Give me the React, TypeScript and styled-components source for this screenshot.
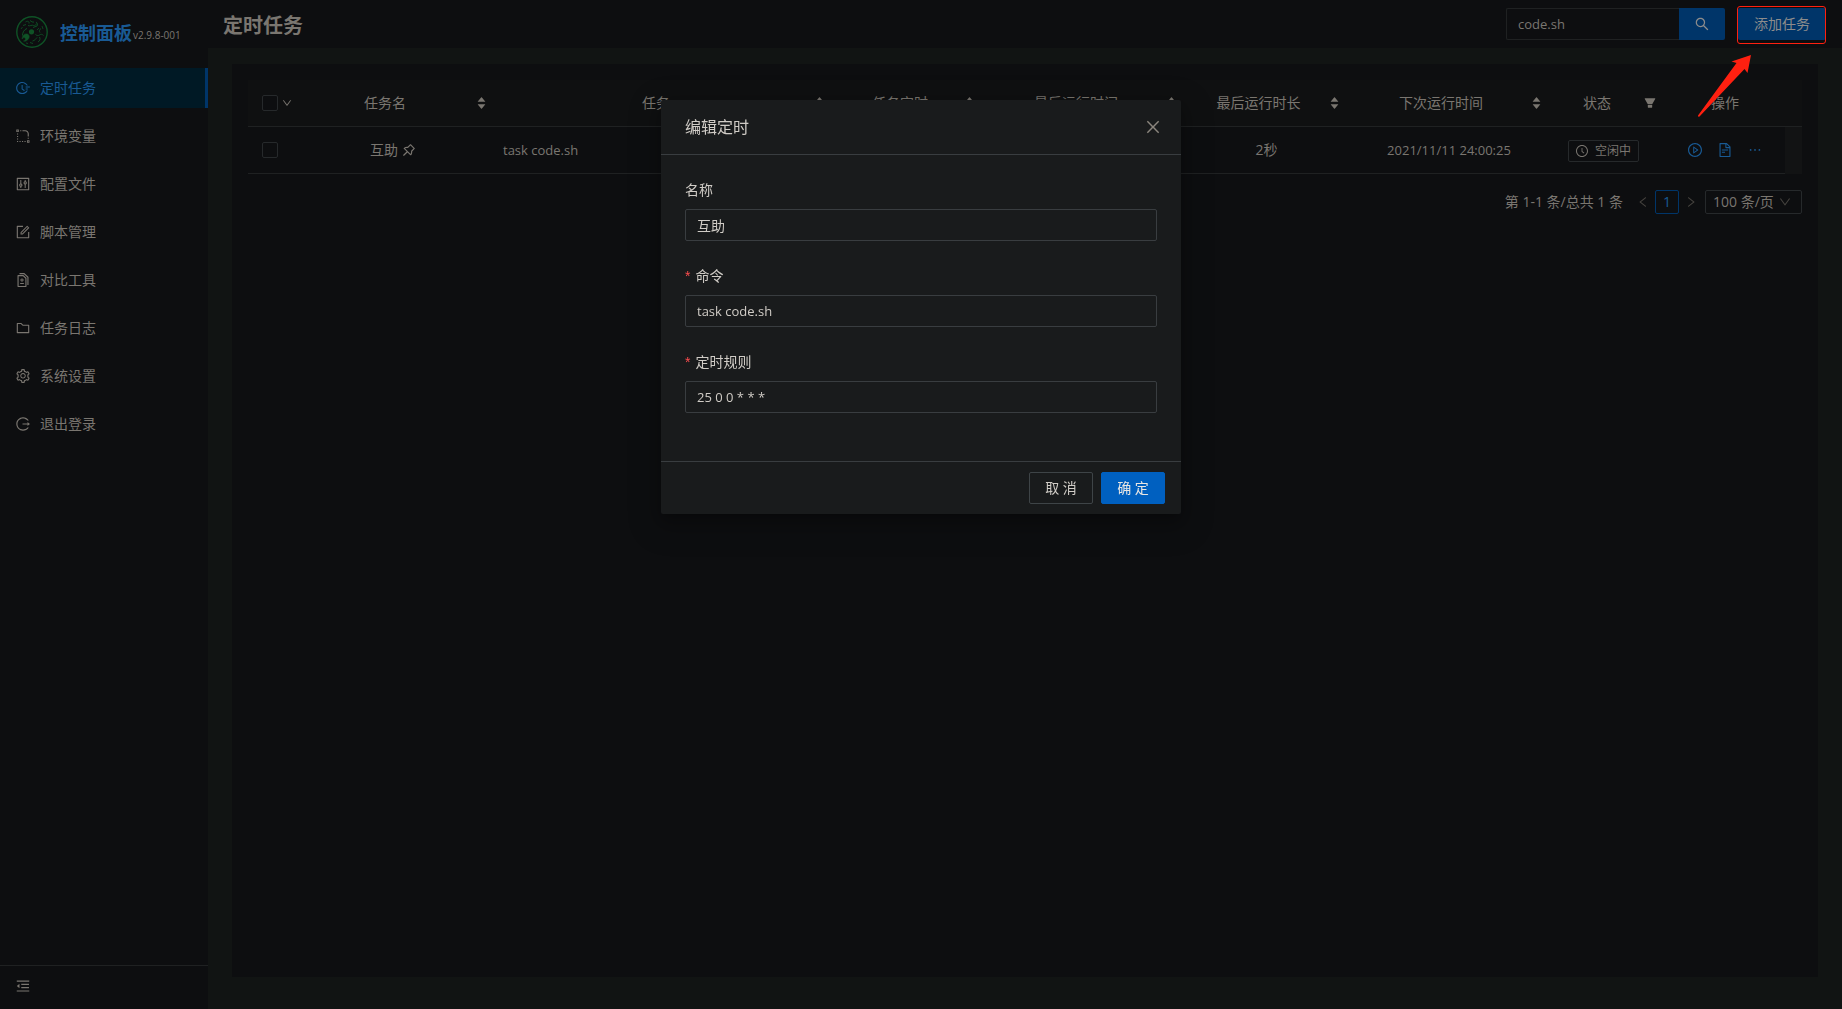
import React, { useState } from 'react';
import styled, { createGlobalStyle, css } from 'styled-components';
import type { IconType } from 'react-icons';
import {
  AiOutlineFieldTime,
  AiOutlineRadiusSetting,
  AiOutlineControl,
  AiOutlineForm,
  AiOutlineDiff,
  AiOutlineFolder,
  AiOutlineSetting,
  AiOutlineLogout,
  AiOutlineMenuFold,
  AiOutlinePushpin,
  AiOutlineClockCircle,
  AiOutlinePlayCircle,
  AiOutlineFileText,
  AiOutlineEllipsis,
  AiOutlineSearch,
  AiOutlineClose,
  AiOutlineLeft,
  AiOutlineRight,
  AiOutlineDown,
  AiFillCaretUp,
  AiFillCaretDown,
  AiFillFilter,
} from 'react-icons/ai';

const color = {
  surface: '#0d0e10',
  page: '#111413',
  tableHead: '#0f1011',
  gutter: '#121314',
  line: '#1f2122',
  text: '#7a7670',
  faint: '#46433f',
  link: '#195a94',
  primary: '#003569',
  modal: '#191b1c',
  modalLine: '#393d40',
  modalText: '#d0ccc6',
  modalPrimary: '#0060c0',
  danger: '#ff4d4f',
  mark: '#ff2010',
};

const GlobalStyle = createGlobalStyle`
  *, *::before, *::after { box-sizing: border-box; }
  body {
    margin: 0;
    background: ${color.page};
    color: ${color.text};
    font-family: "Open Sans", "Noto Sans CJK SC", sans-serif;
    font-size: 14px;
    line-height: 22px;
  }
  button, input, select { font: inherit; color: inherit; }
  svg { display: block; flex: none; }
`;

const Layout = styled.div`
  display: flex;
  min-height: 100vh;
`;

const Sider = styled.aside`
  display: flex;
  flex-direction: column;
  flex: 0 0 208px;
  background: ${color.surface};
`;

const Brand = styled.a`
  display: flex;
  align-items: center;
  height: 64px;
  padding: 0 16px;
  text-decoration: none;
  color: ${color.text};
`;

const BrandName = styled.h1`
  margin: 2px 0 0 12px;
  font-size: 18px;
  font-weight: 700;
  color: ${color.link};
`;

const Version = styled.span`
  margin: 6px 0 0 1px;
  font-size: 10px;
`;

const Menu = styled.nav`
  display: flex;
  flex-direction: column;
  gap: 8px;
  flex: 1;
  padding-top: 4px;
`;

const MenuLink = styled.a<{ $active?: boolean }>`
  display: flex;
  align-items: center;
  gap: 10px;
  height: 40px;
  padding-left: 16px;
  text-decoration: none;
  color: ${color.text};
  ${(p) =>
    p.$active &&
    css`
      color: ${color.link};
      background: #001925;
      border-right: 3px solid ${color.primary};
    `}
`;

const Collapse = styled.button`
  display: flex;
  align-items: center;
  height: 44px;
  padding: 0 16px 4px;
  border: 0;
  border-top: 1px solid ${color.line};
  background: none;
`;

const Main = styled.main`
  display: flex;
  flex-direction: column;
  flex: 1;
  min-width: 0;
`;

const Header = styled.header`
  display: flex;
  align-items: center;
  justify-content: space-between;
  height: 48px;
  padding: 0 16px 0 15px;
  background: ${color.surface};
`;

const PageTitle = styled.h2`
  margin: 0;
  padding-top: 4px;
  font-size: 20px;
  font-weight: 700;
`;

const Actions = styled.div`
  display: flex;
  align-items: center;
  gap: 13px;
`;

const SearchBox = styled.form`
  display: flex;
  width: 219px;
`;

const SearchInput = styled.input`
  flex: 1;
  min-width: 0;
  height: 32px;
  padding: 0 11px;
  border: 1px solid ${color.line};
  border-right: 0;
  border-radius: 2px 0 0 2px;
  background: ${color.surface};
  font-size: 13px;
  outline: 0;
`;

const SearchButton = styled.button`
  display: flex;
  align-items: center;
  justify-content: center;
  width: 46px;
  height: 32px;
  padding: 0;
  border: 0;
  border-radius: 0 2px 2px 0;
  background: ${color.primary};
  color: #8c8c8c;
`;

const Callout = styled.div`
  position: relative;
`;

const AddButton = styled.button`
  height: 32px;
  padding: 0 16px;
  border: 0;
  border-radius: 2px;
  background: ${color.primary};
  color: #8c8c8c;
`;

const CalloutFrame = styled.span`
  position: absolute;
  inset: -2px 0 -4px -1px;
  border: 1px solid ${color.mark};
  border-radius: 3px;
  pointer-events: none;
`;

const CalloutArrow = styled.svg`
  position: absolute;
  top: 47px;
  left: -41px;
  pointer-events: none;
`;

const Card = styled.section`
  flex: 1;
  margin: 16px 24px 32px;
  padding: 16px;
  background: ${color.surface};
`;

const Table = styled.table`
  width: 100%;
  table-layout: fixed;
  border-collapse: separate;
  border-spacing: 0;
`;

const Th = styled.th`
  height: 47px;
  padding: 0 8px;
  border-bottom: 1px solid ${color.line};
  background: ${color.tableHead};
  font-weight: 400;
  text-align: center;
`;

const Td = styled.td<{ $left?: boolean; $latin?: boolean }>`
  height: 47px;
  padding: 0 8px;
  border-bottom: 1px solid ${color.line};
  text-align: ${(p) => (p.$left ? 'left' : 'center')};
  font-size: ${(p) => (p.$latin ? '13px' : '14px')};
`;

const Gutter = styled.td`
  padding: 0;
  background: ${color.gutter};
`;

const HeadCell = styled.div`
  display: flex;
  align-items: center;
  gap: 4px;
`;

const HeadTitle = styled.span`
  flex: 1;
  white-space: nowrap;
`;

const Sorter = styled.button`
  display: flex;
  flex-direction: column;
  align-items: center;
  width: 12px;
  padding: 0;
  border: 0;
  background: none;
  svg + svg { margin-top: -4px; }
`;

const FilterButton = styled.button`
  width: 12px;
  margin: 0 1px 0 4px;
  padding: 0;
  border: 0;
  background: none;
`;

const SelectCell = styled.div`
  display: flex;
  align-items: center;
  gap: 4px;
  padding-left: 6px;
`;

const Checkbox = styled.input.attrs({ type: 'checkbox' })`
  appearance: none;
  flex: none;
  width: 16px;
  height: 16px;
  margin: 0;
  border: 1px solid #26292b;
  border-radius: 2px;
  background: ${color.surface};
`;

const Inline = styled.div<{ $gap: number; $color?: string }>`
  display: flex;
  align-items: center;
  justify-content: center;
  gap: ${(p) => p.$gap}px;
  color: ${(p) => p.$color ?? 'inherit'};
`;

const Tag = styled.span`
  display: inline-flex;
  align-items: center;
  gap: 7px;
  height: 22px;
  margin-right: 8px;
  padding: 0 7px;
  border: 1px solid #26292b;
  border-radius: 2px;
  font-size: 12px;
  vertical-align: middle;
`;

const IconButton = styled.button`
  padding: 0;
  border: 0;
  background: none;
  color: inherit;
`;

const Pagination = styled.nav`
  display: flex;
  align-items: center;
  justify-content: flex-end;
  margin-top: 16px;
  height: 24px;
`;

const Total = styled.span`
  margin-right: 8px;
`;

const PageArrow = styled.button`
  display: flex;
  align-items: center;
  justify-content: center;
  width: 24px;
  height: 24px;
  padding: 0;
  border: 0;
  background: none;
  color: ${color.faint};
`;

const PageNumber = styled.button`
  width: 24px;
  height: 24px;
  padding: 0;
  border: 1px solid ${color.primary};
  border-radius: 2px;
  background: none;
  color: ${color.link};
  line-height: 20px;
`;

const PageSize = styled.div`
  display: grid;
  grid-template-columns: 1fr;
  align-items: center;
  width: 97px;
  margin-left: 2px;
  > * { grid-area: 1 / 1; }
  svg {
    justify-self: end;
    margin-right: 11px;
    color: ${color.faint};
    pointer-events: none;
  }
`;

const PageSizeSelect = styled.select`
  appearance: none;
  width: 100%;
  height: 24px;
  padding: 0 7px;
  border: 1px solid #26292b;
  border-radius: 2px;
  background: ${color.surface};
  line-height: 20px;
`;

const ModalWrap = styled.div`
  position: fixed;
  inset: 0;
  display: flex;
  align-items: flex-start;
  justify-content: center;
  padding-top: 100px;
`;

const Modal = styled.div`
  width: 520px;
  border-radius: 2px;
  background: ${color.modal};
  color: ${color.modalText};
  box-shadow:
    0 3px 6px -4px rgba(0, 0, 0, 0.24),
    0 6px 16px 0 rgba(0, 0, 0, 0.2),
    0 9px 28px 8px rgba(0, 0, 0, 0.16);
`;

const ModalHead = styled.div`
  display: flex;
  align-items: center;
  justify-content: space-between;
  height: 55px;
  padding: 0 20px 0 24px;
  border-bottom: 1px solid ${color.modalLine};
`;

const ModalTitle = styled.h3`
  margin: 0;
  font-size: 16px;
  font-weight: 400;
`;

const CloseButton = styled.button`
  padding: 0;
  border: 0;
  background: none;
  color: #8a857d;
`;

const ModalBody = styled.form`
  padding: 24px;
`;

const Field = styled.div`
  display: flex;
  flex-direction: column;
  gap: 8px;
  margin-bottom: 24px;
`;

const Label = styled.label<{ $required?: boolean }>`
  display: flex;
  ${(p) =>
    p.$required &&
    css`
      &::before {
        content: '*';
        margin-right: 5px;
        color: ${color.danger};
        font-family: "Liberation Sans", sans-serif;
      }
    `}
`;

const TextInput = styled.input<{ $latin?: boolean }>`
  width: 100%;
  height: 32px;
  padding: 0 11px;
  border: 1px solid ${color.modalLine};
  border-radius: 2px;
  background: ${color.modal};
  font-size: ${(p) => (p.$latin ? '13px' : '14px')};
  outline: 0;
`;

const ModalFoot = styled.div`
  display: flex;
  justify-content: flex-end;
  gap: 8px;
  padding: 10px 16px;
  border-top: 1px solid ${color.modalLine};
`;

const FootButton = styled.button<{ $primary?: boolean }>`
  width: 64px;
  height: 32px;
  padding: 0;
  border: 1px solid ${(p) => (p.$primary ? color.modalPrimary : '#3e4447')};
  border-radius: 2px;
  background: ${(p) => (p.$primary ? color.modalPrimary : color.modal)};
  color: ${(p) => (p.$primary ? '#e8e6e3' : 'inherit')};
`;

const menu = [
  { label: '定时任务', icon: AiOutlineFieldTime },
  { label: '环境变量', icon: AiOutlineRadiusSetting },
  { label: '配置文件', icon: AiOutlineControl },
  { label: '脚本管理', icon: AiOutlineForm },
  { label: '对比工具', icon: AiOutlineDiff },
  { label: '任务日志', icon: AiOutlineFolder },
  { label: '系统设置', icon: AiOutlineSetting },
  { label: '退出登录', icon: AiOutlineLogout },
];

const sortable = ['任务名', '任务', '任务定时', '最后运行时间', '最后运行时长', '下次运行时间'];

/* The icon set leaves a 64-unit margin inside its 1024 grid; trim it so the glyph fills its box. */
function Glyph({ icon: Icon, size = 14 }: { icon: IconType; size?: number }) {
  return <Icon size={size} viewBox="64 64 896 896" />;
}

function DragonLogo() {
  return (
    <svg width="32" height="32" viewBox="0 0 32 32" fill="none" stroke="#0f5226" aria-hidden="true">
      <circle cx="16" cy="16" r="15.2" strokeWidth="1.4" />
      <circle cx="15.5" cy="15.8" r="2.6" fill="#0f5226" stroke="none" />
      <path d="M9.500 6c2-1.500 4-.5 3.500 1.500M14 4.500c1.500 1 2.500 2 4 1.500M12 9.500c2 1 4-1 5.500 0s2.500-1 3-2M7 9.500l3-1M20 6c1.500 1 2 2.500 1 4M17 11.500l4-1.500" strokeWidth="0.900" />
      <path d="M11 12.500c-3 1-4.500 4-4.500 7" strokeWidth="1" />
      <path d="M6 23c.5-4 2.500-5.500 5-5s3 3.500 1 5.500-4 2-4.500 1.500c2-.5 2.500-2 1.500-3s-2 0-3 1z" fill="#0f5226" strokeWidth="0.500" />
      <path d="M19.500 18.500c1 1 2.500 1.500 4 .5s2.500-1 4 .5M21 21.500c-1.500 1.500-2 3-4.500 3.500M23.500 21c1 1.500.5 4-1.500 5M25 12.500c-1.500 1-2 2.500-1 4M14 26.500l3 1" strokeWidth="0.900" />
      <path d="M5 13l1.500-2M26 10l1 3M10 27l2 .5M21 14l2-2" strokeWidth="0.800" />
    </svg>
  );
}

export default function App() {
  const [query, setQuery] = useState('code.sh');
  const [name, setName] = useState('互助');
  const [command, setCommand] = useState('task code.sh');
  const [schedule, setSchedule] = useState('25 0 0 * * *');

  return (
    <>
      <GlobalStyle />
      <Layout>
        <Sider>
          <Brand href="#">
            <DragonLogo />
            <BrandName>控制面板</BrandName>
            <Version>v2.9.8-001</Version>
          </Brand>
          <Menu aria-label="控制面板">
            {menu.map(({ label, icon }, i) => (
              <MenuLink key={label} href="#" $active={i === 0}>
                <Glyph icon={icon} />
                {label}
              </MenuLink>
            ))}
          </Menu>
          <Collapse type="button" aria-label="collapse">
            <Glyph icon={AiOutlineMenuFold} />
          </Collapse>
        </Sider>

        <Main>
          <Header>
            <PageTitle>定时任务</PageTitle>
            <Actions>
              <SearchBox onSubmit={(e) => e.preventDefault()}>
                <SearchInput aria-label="search" value={query} onChange={(e) => setQuery(e.target.value)} />
                <SearchButton aria-label="search">
                  <Glyph icon={AiOutlineSearch} />
                </SearchButton>
              </SearchBox>
              <Callout>
                <AddButton type="button">添加任务</AddButton>
                <CalloutFrame />
                <CalloutArrow width="56" height="64" viewBox="0 0 56 64" fill={color.mark} aria-hidden="true">
                  <path d="M54 0 L34.500 6.500 L39.500 8 L1 60.500 Q1 62.500 2.500 61.500 L47.500 14 L50.500 18 Z" />
                </CalloutArrow>
              </Callout>
            </Actions>
          </Header>

          <Card>
            <Table>
              <colgroup>
                <col width="43" />
                <col width="204" />
                <col />
                <col width="150" />
                <col width="202" />
                <col width="163" />
                <col width="202" />
                <col width="115" />
                <col width="120" />
                <col width="17" />
              </colgroup>
              <thead>
                <tr>
                  <Th>
                    <SelectCell>
                      <Checkbox aria-label="select all" />
                      <Glyph icon={AiOutlineDown} size={10} />
                    </SelectCell>
                  </Th>
                  {sortable.map((title) => (
                    <Th key={title} scope="col">
                      <HeadCell>
                        <HeadTitle>{title}</HeadTitle>
                        <Sorter type="button" aria-label={title}>
                          <AiFillCaretUp size={11} />
                          <AiFillCaretDown size={11} />
                        </Sorter>
                      </HeadCell>
                    </Th>
                  ))}
                  <Th scope="col">
                    <HeadCell>
                      <HeadTitle>状态</HeadTitle>
                      <FilterButton type="button" aria-label="filter">
                        <Glyph icon={AiFillFilter} size={12} />
                      </FilterButton>
                    </HeadCell>
                  </Th>
                  <Th scope="col">操作</Th>
                  <Th />
                </tr>
              </thead>
              <tbody>
                <tr>
                  <Td>
                    <SelectCell>
                      <Checkbox aria-label="互助" />
                    </SelectCell>
                  </Td>
                  <Td>
                    <Inline $gap={4}>
                      互助
                      <Glyph icon={AiOutlinePushpin} />
                    </Inline>
                  </Td>
                  <Td $left $latin>task code.sh</Td>
                  <Td $latin>25 0 0 * * *</Td>
                  <Td />
                  <Td>2秒</Td>
                  <Td $latin>2021/11/11 24:00:25</Td>
                  <Td>
                    <Tag>
                      <Glyph icon={AiOutlineClockCircle} size={12} />
                      空闲中
                    </Tag>
                  </Td>
                  <Td>
                    <Inline $gap={16} $color={color.link}>
                      <IconButton type="button" aria-label="run">
                        <Glyph icon={AiOutlinePlayCircle} />
                      </IconButton>
                      <IconButton type="button" aria-label="log">
                        <Glyph icon={AiOutlineFileText} />
                      </IconButton>
                      <IconButton type="button" aria-label="more">
                        <Glyph icon={AiOutlineEllipsis} />
                      </IconButton>
                    </Inline>
                  </Td>
                  <Gutter />
                </tr>
              </tbody>
            </Table>

            <Pagination aria-label="pagination">
              <Total>第 1-1 条/总共 1 条</Total>
              <PageArrow type="button" aria-label="previous">
                <Glyph icon={AiOutlineLeft} size={12} />
              </PageArrow>
              <PageNumber type="button">1</PageNumber>
              <PageArrow type="button" aria-label="next">
                <Glyph icon={AiOutlineRight} size={12} />
              </PageArrow>
              <PageSize>
                <PageSizeSelect aria-label="page size" defaultValue="100">
                  <option value="100">100 条/页</option>
                </PageSizeSelect>
                <Glyph icon={AiOutlineDown} size={12} />
              </PageSize>
            </Pagination>
          </Card>
        </Main>
      </Layout>

      <ModalWrap>
        <Modal role="dialog" aria-modal="true" aria-labelledby="modal-title">
          <ModalHead>
            <ModalTitle id="modal-title">编辑定时</ModalTitle>
            <CloseButton type="button" aria-label="close">
              <Glyph icon={AiOutlineClose} size={16} />
            </CloseButton>
          </ModalHead>
          <ModalBody id="cron-form" onSubmit={(e) => e.preventDefault()}>
            <Field>
              <Label htmlFor="name">名称</Label>
              <TextInput id="name" value={name} onChange={(e) => setName(e.target.value)} />
            </Field>
            <Field>
              <Label htmlFor="command" $required>命令</Label>
              <TextInput id="command" $latin value={command} onChange={(e) => setCommand(e.target.value)} />
            </Field>
            <Field>
              <Label htmlFor="schedule" $required>定时规则</Label>
              <TextInput id="schedule" $latin value={schedule} onChange={(e) => setSchedule(e.target.value)} />
            </Field>
          </ModalBody>
          <ModalFoot>
            <FootButton type="button">取 消</FootButton>
            <FootButton type="submit" form="cron-form" $primary>确 定</FootButton>
          </ModalFoot>
        </Modal>
      </ModalWrap>
    </>
  );
}
